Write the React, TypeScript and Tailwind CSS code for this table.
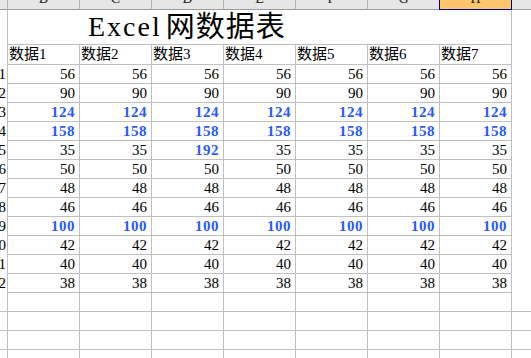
const cols = ["B", "C", "D", "E", "F", "G", "H"];

interface DataRow {
  label: string;
  values: number[];
  blue: boolean[];
}

const all = (v: number): DataRow["values"] => cols.map(() => v);
const mark = (b: boolean) => cols.map(() => b);

const rows: DataRow[] = [
  { label: "11", values: all(56), blue: mark(false) },
  { label: "12", values: all(90), blue: mark(false) },
  { label: "13", values: all(124), blue: mark(true) },
  { label: "14", values: all(158), blue: mark(true) },
  {
    label: "15",
    values: [35, 35, 192, 35, 35, 35, 35],
    blue: [false, false, true, false, false, false, false],
  },
  { label: "16", values: all(50), blue: mark(false) },
  { label: "17", values: all(48), blue: mark(false) },
  { label: "18", values: all(46), blue: mark(false) },
  { label: "19", values: all(100), blue: mark(true) },
  { label: "20", values: all(42), blue: mark(false) },
  { label: "21", values: all(40), blue: mark(false) },
  { label: "22", values: all(38), blue: mark(false) },
];

const App = () => {
  return (
    <div className="relative h-[358px] w-[531px] overflow-hidden bg-white text-[15px] text-black [font-family:'Liberation_Serif','Noto_Sans_CJK_SC',serif]">
      {/* 열 머리글 */}
      <div className="flex h-[10px] bg-[#e6e6e6]">
        <div className="h-[10px] w-[8px] shrink-0 border-r border-b border-r-[#b4b4b4] border-b-[#9c9c9c]"></div>
        {cols.map((c) => (
          <div
            key={c}
            className={
              c === "H"
                ? "ml-[-1px] h-[10px] w-[73px] shrink-0 overflow-hidden border-x border-b border-[#000080] bg-[#ffc66b]"
                : "h-[10px] w-[72px] shrink-0 overflow-hidden border-r border-b border-r-[#b4b4b4] border-b-[#9c9c9c]"
            }
          >
            <div className="mt-[-9px] text-center text-[14px] leading-[16px] text-[#222]">{c}</div>
          </div>
        ))}
        <div className="h-[10px] flex-1 border-b border-b-[#9c9c9c]"></div>
      </div>

      {/* 제목 */}
      <div className="flex h-[35px]">
        <div className="w-[8px] shrink-0 border-r border-[#c0c0c0]"></div>
        <div className="flex w-[504px] shrink-0 items-center border-r border-b border-[#c0c0c0] pl-[80px]">
          <span className="text-[28px] leading-[34px] tracking-[2px]">Excel</span>
          <span className="ml-[4px] text-[29px] font-normal leading-[34px] tracking-[1px]">网数据表</span>
        </div>
      </div>

      {/* 데이터 머리글 */}
      <div className="flex h-[20px]">
        <div className="w-[8px] shrink-0 border-r border-[#c0c0c0]"></div>
        {cols.map((c, i) => (
          <div
            key={c}
            className="w-[72px] shrink-0 overflow-hidden whitespace-nowrap border-r border-b border-[#c0c0c0] pl-[1px] text-[15px] leading-[19px]"
          >
            数据{i + 1}
          </div>
        ))}
      </div>

      {/* 데이터 */}
      {rows.map((row) => (
        <div key={row.label} className="flex h-[19px]">
          <div className="w-[8px] shrink-0 overflow-hidden border-r border-[#c0c0c0] pr-[1px] text-right leading-[18px]">
            <span className="float-right">{row.label}</span>
          </div>
          {row.values.map((v, i) => (
            <div
              key={i}
              className={
                row.blue[i]
                  ? "w-[72px] shrink-0 border-r border-b border-[#c0c0c0] pr-[4px] text-right font-bold leading-[19px] tracking-[0.5px] text-[#2b5cf6]"
                  : "w-[72px] shrink-0 border-r border-b border-[#c0c0c0] pr-[4px] text-right leading-[19px]"
              }
            >
              {v}
            </div>
          ))}
        </div>
      ))}

      {/* 빈 행 */}
      {[0, 1, 2, 3].map((r) => (
        <div key={r} className="flex h-[19px]">
          <div className="w-[8px] shrink-0 border-r border-b border-[#c0c0c0]"></div>
          {cols.map((c) => (
            <div key={c} className="w-[72px] shrink-0 border-r border-b border-[#c0c0c0]"></div>
          ))}
          <div className="flex-1 border-b border-[#c0c0c0]"></div>
        </div>
      ))}
    </div>
  );
};

export default App;
